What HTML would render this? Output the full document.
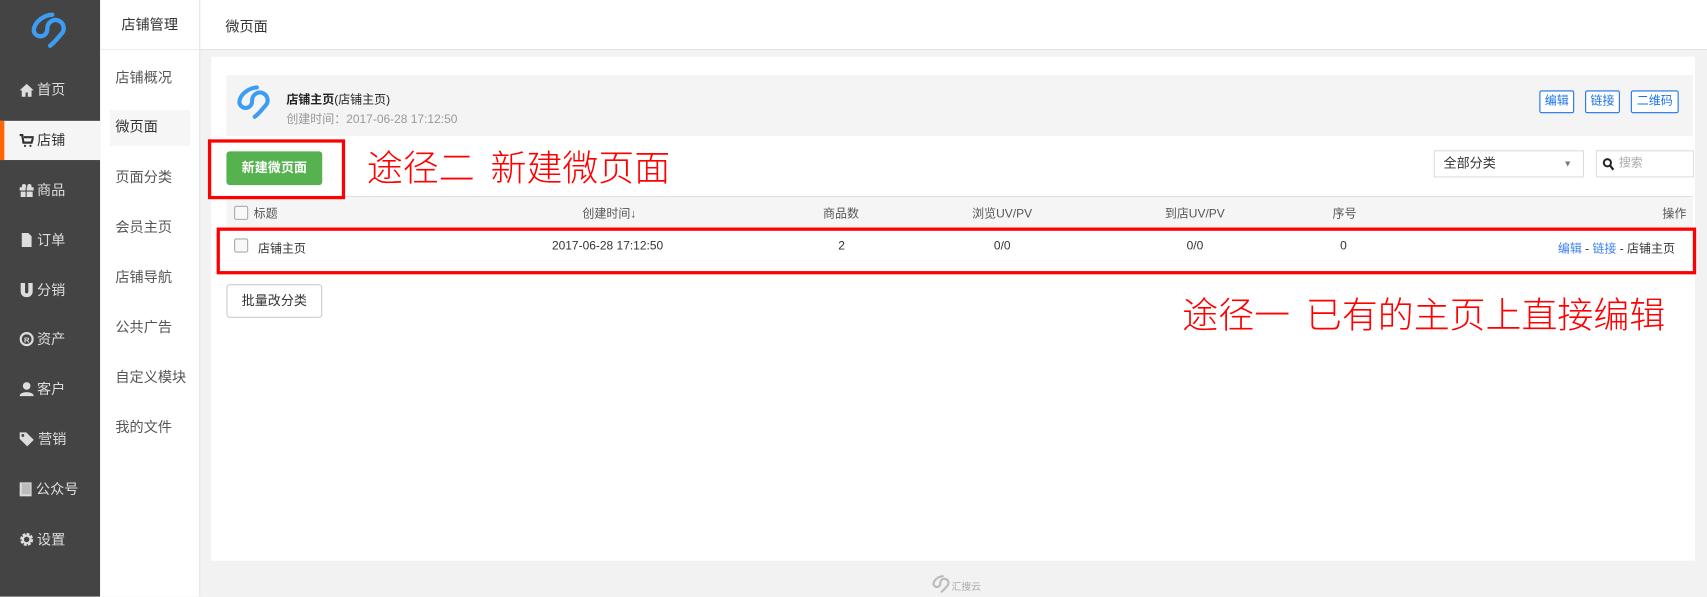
<!DOCTYPE html>
<html><head><meta charset="utf-8"><style>
*{margin:0;padding:0;box-sizing:border-box}
html,body{width:1707px;height:597px;overflow:hidden;background:#f2f2f2}
body{font-family:"Liberation Sans","Noto Sans CJK SC",sans-serif;font-size:12px;color:#333}
#w{position:absolute;left:0;top:0;width:1568px;height:548px;transform:scale(1.08865);transform-origin:0 0;background:#f2f2f2}
.a{position:absolute}
#s1{left:0;top:0;width:92px;height:548px;background:#444}
.n{position:absolute;left:0;width:92px;height:36px;line-height:36px;color:#ddd;font-size:13px;padding-left:18px;white-space:nowrap}
.n svg{vertical-align:-2px;margin-right:3px}
.n.on{background:#f5f5f5;color:#333;border-left:4px solid #f60;padding-left:14px}
#s2{left:92px;top:0;width:92px;height:548px;background:#fff;border-right:1px solid #e3e3e3}
.m{position:absolute;left:14px;font-size:13px;color:#555;line-height:16px}
#top{left:184px;top:0;width:1384px;height:46px;background:#fff;border-bottom:1px solid #e3e3e3}
#panel{left:194px;top:52px;width:1363px;height:463px;background:#fff}
.bt{position:absolute;height:21px;line-height:19px;border:1px solid #1a73e8;color:#1a73e8;border-radius:2px;font-size:11px;text-align:center;background:#fff}
.red{position:absolute;border:3px solid #f00}
.rt{position:absolute;color:#f00;font-family:"Noto Sans CJK SC",sans-serif;font-weight:300;font-size:33px;line-height:36px;white-space:nowrap}
.th{position:absolute;top:188px;font-size:11px;color:#555}
.td{position:absolute;top:220px;font-size:11px;color:#333}
.cb{position:absolute;width:13px;height:13px;border:1px solid #aaa;border-radius:2px;background:#f8f8f8}
</style></head><body><div id="w">
<svg width="0" height="0" style="position:absolute"><defs><path id="lg" d="M20 2.5 C12 3 3.5 9 3 17 A6.2 6.2 0 0 0 15.2 17.5 L15.5 15 A7.5 7.5 0 1 1 28 20.5 C25 24 22 28 18 31" fill="none" stroke-width="4" stroke-linecap="round" stroke-linejoin="round"/></defs></svg>
<div id="s1" class="a">
<svg class="a" style="left:28px;top:11px" width="36" height="36" viewBox="0 0 36 36"><use href="#lg" stroke="#3d9df2"/></svg>
<div class="n" style="top:65px"><svg width="13" height="12"><path d="M6.5 0L0 6h2v6h3.5V8h2v4H11V6h2z" fill="#ddd"/></svg>首页</div>
<div class="n on" style="top:111px"><svg width="13" height="12"><path d="M0 1h2.5l1 7h7.5l1.5-5H4" fill="none" stroke="#333" stroke-width="2"/><circle cx="5" cy="11" r="1" fill="#333"/><circle cx="10" cy="11" r="1" fill="#333"/></svg>店铺</div>
<div class="n" style="top:157px"><svg width="13" height="12"><rect x="0" y="3" width="13" height="3" fill="#ddd"/><rect x="1" y="7" width="11" height="5" fill="#ddd"/><path d="M6 3V12" stroke="#444"/><circle cx="4" cy="2" r="2" fill="#ddd"/><circle cx="9" cy="2" r="2" fill="#ddd"/></svg>商品</div>
<div class="n" style="top:203px"><svg width="13" height="13"><path d="M2 0h6l3 3v10H2z" fill="#ddd"/></svg>订单</div>
<div class="n" style="top:249px"><svg width="13" height="13"><path d="M1 0h4v8a1.5 1.5 0 003 0V0h4v8a5.5 5 0 01-11 0z" fill="#ddd"/></svg>分销</div>
<div class="n" style="top:294px"><svg width="13" height="13"><circle cx="6.5" cy="6.5" r="5.5" fill="none" stroke="#ddd" stroke-width="2"/><text x="4" y="9.5" font-size="7" fill="#ddd" font-family="Liberation Sans" font-weight="bold">R</text></svg>资产</div>
<div class="n" style="top:340px"><svg width="13" height="13"><circle cx="6.5" cy="3.5" r="3.5" fill="#ddd"/><path d="M0 13c0-5 13-5 13 0z" fill="#ddd"/></svg>客户</div>
<div class="n" style="top:386px"><svg width="14" height="13"><path d="M0 0h6l7 7-6 6-7-7z" fill="#ddd"/><circle cx="3" cy="3" r="1.3" fill="#444"/></svg>营销</div>
<div class="n" style="top:432px"><svg width="12" height="13"><rect x="0" y="0" width="11" height="13" fill="#ddd"/><rect x="2" y="1" width="8" height="10" fill="#bbb"/></svg>公众号</div>
<div class="n" style="top:478px"><svg width="13" height="13"><circle cx="6.5" cy="6.5" r="4.5" fill="none" stroke="#ddd" stroke-width="3" stroke-dasharray="2.4 1.1"/><circle cx="6.5" cy="6.5" r="3.5" fill="none" stroke="#ddd" stroke-width="2"/></svg>设置</div>
</div>
<div id="s2" class="a">
<div class="a" style="left:0;top:0;width:91px;height:46px;border-bottom:1px solid #ececec;text-align:center;line-height:46px;font-size:13px;color:#333">店铺管理</div>
<div class="m" style="top:64px">店铺概况</div>
<div class="a" style="left:9px;top:101px;width:74px;height:33px;background:#f6f6f6"></div>
<div class="m" style="top:109px;color:#333">微页面</div>
<div class="m" style="top:155px">页面分类</div>
<div class="m" style="top:201px">会员主页</div>
<div class="m" style="top:247px">店铺导航</div>
<div class="m" style="top:293px">公共广告</div>
<div class="m" style="top:339px">自定义模块</div>
<div class="m" style="top:385px">我的文件</div>
</div>
<div id="top" class="a"><div class="a" style="left:23px;top:14px;font-size:13px">微页面</div></div>
<div id="panel" class="a"></div>
<div class="a" style="left:208px;top:69px;width:1347px;height:56px;background:#f4f4f4"></div>
<svg class="a" style="left:217px;top:78px" width="34" height="34" viewBox="0 0 36 36"><use href="#lg" stroke="#3d9df2"/></svg>
<div class="a" style="left:263px;top:83px;font-size:11px;color:#222"><b>店铺主页</b>(店铺主页)</div>
<div class="a" style="left:263px;top:101px;font-size:11px;color:#999">创建时间：2017-06-28 17:12:50</div>
<div class="bt" style="left:1414px;top:83px;width:32px">编辑</div>
<div class="bt" style="left:1456px;top:83px;width:32px">链接</div>
<div class="bt" style="left:1498px;top:83px;width:44px">二维码</div>
<div class="a" style="left:208px;top:139px;width:88px;height:31px;background:#55b24f;border-radius:3px;color:#fff;font-size:12px;font-weight:bold;text-align:center;line-height:31px">新建微页面</div>
<div class="a" style="left:1317px;top:138px;width:138px;height:25px;border:1px solid #ddd;background:#fff;font-size:12px;line-height:23px;padding-left:8px">全部分类<span style="position:absolute;right:10px;top:0;font-size:8px;color:#777">▼</span></div>
<div class="a" style="left:1466px;top:138px;width:90px;height:25px;border:1px solid #ddd;background:#fff;font-size:11px;line-height:23px;padding-left:20px;color:#aaa"><svg class="a" style="left:5px;top:6px" width="11" height="12"><circle cx="4.5" cy="4.5" r="3.3" fill="none" stroke="#222" stroke-width="1.8"/><path d="M7 7l3 4" stroke="#222" stroke-width="2"/></svg>搜索</div>
<div class="a" style="left:208px;top:180px;width:1347px;height:30px;background:#f5f5f5;border-top:1px solid #e2e2e2"></div>
<div class="cb" style="left:215px;top:189px"></div>
<div class="th" style="left:233px">标题</div>
<div class="th" style="left:535px">创建时间↓</div>
<div class="th" style="left:756px">商品数</div>
<div class="th" style="left:893px">浏览UV/PV</div>
<div class="th" style="left:1070px">到店UV/PV</div>
<div class="th" style="left:1224px">序号</div>
<div class="th" style="left:1527px">操作</div>
<div class="cb" style="left:215px;top:219px"></div>
<div class="td" style="left:237px">店铺主页</div>
<div class="td" style="left:507px">2017-06-28 17:12:50</div>
<div class="td" style="left:770px">2</div>
<div class="td" style="left:913px">0/0</div>
<div class="td" style="left:1090px">0/0</div>
<div class="td" style="left:1231px">0</div>
<div class="td" style="left:1431px"><span style="color:#3b7ef0">编辑</span> - <span style="color:#3b7ef0">链接</span> - 店铺主页</div>
<div class="a" style="left:208px;top:261px;width:88px;height:31px;border:1px solid #ccc;border-radius:3px;background:#fff;text-align:center;line-height:29px;font-size:12px">批量改分类</div>
<div class="red" style="left:191px;top:128px;width:126px;height:55px"></div>
<div class="red" style="left:199px;top:209px;width:1359px;height:43px"></div>
<div class="rt" style="left:337px;top:134px">途径二&nbsp; 新建微页面</div>
<div class="rt" style="left:1086px;top:269px">途径一&nbsp; 已有的主页上直接编辑</div>
<svg class="a" style="left:855px;top:528px" width="20" height="18" viewBox="0 0 36 36"><use href="#lg" stroke="#bbb"/></svg>
<div class="a" style="left:874px;top:532px;font-size:9px;color:#aaa">汇搜云</div>
</div></body></html>
